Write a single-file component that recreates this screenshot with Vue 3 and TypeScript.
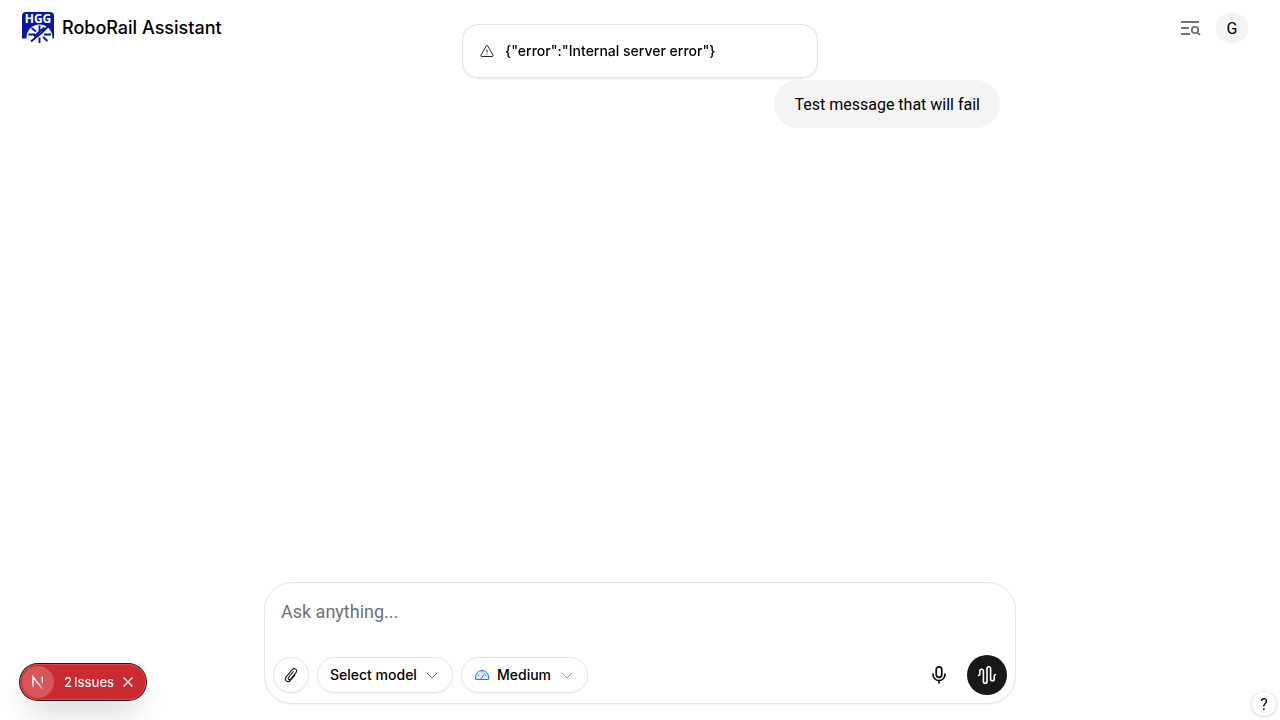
<script setup lang="ts">
import { ref } from 'vue'

interface Message {
  id: number
  text: string
}

const messages = ref<Message[]>([{ id: 1, text: 'Test message that will fail' }])
const toast = ref('{"error":"Internal server error"}')
const draft = ref('')
const model = ref('Select model')
const effort = ref('Medium')
const issues = ref(2)
const issuesOpen = ref(true)
</script>

<template>
  <div class="page">
    <header class="header">
      <a class="brand" href="#">
        <svg class="logo" viewBox="0 0 32 32" aria-hidden="true">
          <path d="M4 0H28Q32 0 32 4V26.500H0V4Q0 0 4 0Z" fill="#0717a0" />
          <circle cx="17.500" cy="25.500" r="13" fill="#fff" />
          <path d="M17.500 13.500V19M9.500 16L14 19.500M6.500 22.500H13M22 22.500H29M9 29.500L20 20.500L26 14.500M25.500 29L21 25M17.500 25.500V31M12 24.500L22.500 15.500" fill="none" stroke="#0717a0" stroke-width="1.900" />
          <text x="16" y="10.800" text-anchor="middle" fill="#fff">HGG</text>
        </svg>
        <span>RoboRail Assistant</span>
      </a>
      <div class="header-actions">
        <button class="icon-button" aria-label="Search history">
          <svg width="24" height="24" viewBox="0 0 24 24" fill="none" stroke="#71717a" stroke-width="1.800">
            <path d="M3 6H21M3 12H11M3 18H12" />
            <circle cx="17" cy="14" r="3.200" />
            <path d="M19.400 16.400L22 19" />
          </svg>
        </button>
        <button class="avatar" aria-label="Account">G</button>
      </div>
    </header>

    <main class="conversation">
      <p v-for="message in messages" :key="message.id" class="bubble">{{ message.text }}</p>
    </main>

    <form class="composer" @submit.prevent>
      <textarea v-model="draft" rows="1" placeholder="Ask anything..." aria-label="Message"></textarea>
      <div class="toolbar">
        <button type="button" class="attach" aria-label="Attach file">
          <svg width="16" height="16" viewBox="0 0 16 16" fill="none" stroke="#18181b" stroke-width="1.100" stroke-linecap="round" stroke-linejoin="round">
            <path d="M10.300 4.700L5.500 10.500Q4.700 11.700 5.700 12.400Q6.700 13 7.600 12L13 5.600Q14.500 3.500 12.700 2.100Q10.900 .900 9.200 2.700L3.200 9.800Q1.300 12.300 3.300 14Q5.400 15.600 7.400 13.500L12 8" />
          </svg>
        </button>
        <label class="picker">
          <select v-model="model" aria-label="Model">
            <option>Select model</option>
          </select>
          <svg class="chevron" width="16" height="16" viewBox="0 0 16 16"><path d="M2.500 5.500L8 11L13.500 5.500" /></svg>
        </label>
        <label class="picker">
          <svg width="16" height="16" viewBox="0 0 16 16" fill="none" stroke="#2979ff" stroke-linejoin="round">
            <path d="M1.500 12.500V10A6.500 6.500 0 0 1 14.500 10V12.500Z" fill="#dbeafe" />
            <path d="M7 12L10.500 6.500M8 4V5.500M3.500 8L4.800 8.600M12.500 8L11.300 8.600" />
          </svg>
          <select v-model="effort" aria-label="Reasoning effort">
            <option>Medium</option>
          </select>
          <svg class="chevron faint" width="16" height="16" viewBox="0 0 16 16"><path d="M2.500 5.500L8 11L13.500 5.500" /></svg>
        </label>
        <span class="spacer"></span>
        <button type="button" class="mic" aria-label="Dictate">
          <svg width="20" height="20" viewBox="0 0 20 20" fill="none" stroke="#09090b" stroke-width="1.700">
            <rect x="7.200" y="1.800" width="5.600" height="10.600" rx="2.800" />
            <path d="M4 8.500V9.500A6 6 0 0 0 16 9.500V8.500M10 15.500V18.500" />
          </svg>
        </button>
        <button type="button" class="voice" aria-label="Voice mode">
          <svg width="20" height="20" viewBox="0 0 20 20" fill="none" stroke="#fff" stroke-width="1.600" stroke-linecap="round">
            <path d="M1.500 10.500Q2.800 10.300 2.800 9V6A1.800 1.800 0 0 1 6.400 6V16.500A1.800 1.800 0 0 0 10 16.500V3.500A1.800 1.800 0 0 1 13.600 3.500V14A1.800 1.800 0 0 0 17.200 14V11Q17.200 9.500 18.500 9.500" />
          </svg>
        </button>
      </div>
    </form>

    <div class="toast" role="alert">
      <svg width="16" height="16" viewBox="0 0 16 16" fill="none" stroke="#27272a" stroke-linejoin="round">
        <path d="M7.300 2.800Q8 1.800 8.700 2.800L14 12Q14.500 13.500 13.300 13.500H2.700Q1.500 13.500 2 12Z" />
        <path d="M8 6.500V9.500M8 10.800V11.800" />
      </svg>
      <span>{{ toast }}</span>
    </div>

    <div v-if="issuesOpen" class="issues">
      <button class="issues-main">
        <span class="n-mark">
          <svg width="14" height="14" viewBox="0 0 14 14" fill="none" stroke-width="1.500">
            <defs>
              <linearGradient id="fade" x1="0" y1="0" x2="0" y2="1">
                <stop offset=".5" stop-color="#fff" />
                <stop offset="1" stop-color="#fff" stop-opacity="0.200" />
              </linearGradient>
            </defs>
            <path d="M2 12.500V2L11.500 14" stroke="url(#fade)" />
            <path d="M10.500 1.500H12V9H10.500Z" fill="url(#fade)" />
          </svg>
        </span>
        <span class="issues-label"><span>{{ issues }}</span> <span>Issues</span></span>
      </button>
      <button class="issues-close" aria-label="Close" @click="issuesOpen = false">
        <svg width="12" height="12" viewBox="0 0 12 12" stroke="#fff" stroke-width="1.300"><path d="M1.500 1.500L10.500 10.500M10.500 1.500L1.500 10.500" /></svg>
      </button>
    </div>

    <button class="help" aria-label="Help">?</button>
  </div>
</template>

<style>
body {
  background: #fff;
}
</style>

<style scoped>
* {
  box-sizing: border-box;
}
.page {
  min-height: 100vh;
  display: flex;
  flex-direction: column;
  font: 400 16px/24px Roboto, "Liberation Sans", sans-serif;
  color: #000;
}
button {
  font: inherit;
  color: inherit;
  padding: 0;
  border: 0;
  background: none;
  cursor: pointer;
  display: flex;
  align-items: center;
  justify-content: center;
}
svg {
  flex: none;
}
.header {
  height: 56px;
  display: flex;
  align-items: center;
  justify-content: space-between;
  padding: 0 32px 0 22px;
}
.brand {
  display: flex;
  align-items: center;
  gap: 8px;
  color: inherit;
  text-decoration: none;
  font-family: Inter, sans-serif;
  font-size: 18px;
  font-weight: 500;
}
.logo {
  width: 32px;
  height: 32px;
  overflow: visible;
}
.logo text {
  font: 700 12px "Noto Sans", sans-serif;
}
.header-actions {
  display: flex;
  align-items: center;
  gap: 14px;
}
.avatar {
  width: 32px;
  height: 32px;
  padding-top: 1px;
  border-radius: 50%;
  background: #f4f4f4;
}
.conversation {
  flex: 1;
  width: 100%;
  max-width: 768px;
  margin: 0 auto;
  padding: 24px;
  display: flex;
  flex-direction: column;
  align-items: flex-end;
}
.bubble {
  margin: 0;
  padding: 13px 20px 11px;
  border-radius: 24px;
  background: #f4f4f4;
}
.composer {
  width: calc(100% - 32px);
  max-width: 752px;
  margin: 0 auto 16px;
  padding: 8px;
  border: 1px solid #e4e4e7;
  border-radius: 28px;
  box-shadow: 0 1px 2px rgba(0, 0, 0, 0.05);
}
textarea {
  display: block;
  width: 100%;
  height: 52px;
  margin-bottom: 12px;
  padding: 9px 8px;
  border: 0;
  outline: 0;
  resize: none;
  background: none;
  font: 400 18px/24px Roboto, sans-serif;
}
textarea::placeholder {
  color: #71717a;
}
.toolbar {
  display: flex;
  align-items: center;
  gap: 8px;
}
.attach,
.picker {
  height: 36px;
  border: 1px solid #e4e4e7;
  border-radius: 18px;
  box-shadow: 0 1px 2px rgba(0, 0, 0, 0.05);
}
.attach {
  width: 36px;
}
.picker {
  display: flex;
  align-items: center;
  gap: 7px;
  padding: 0 12px;
}
select {
  appearance: none;
  padding: 0;
  border: 0;
  outline: 0;
  background: none;
  color: inherit;
  font: 500 14px/20px Inter, sans-serif;
}
.chevron {
  fill: none;
  stroke: #71717a;
}
.faint {
  stroke: #a1a1aa;
}
.spacer {
  flex: 1;
}
.mic,
.voice {
  width: 40px;
  height: 40px;
  border-radius: 50%;
}
.voice {
  background: #18181b;
}
.toast {
  position: fixed;
  top: 24px;
  left: 50%;
  transform: translateX(-50%);
  width: 356px;
  max-width: calc(100vw - 32px);
  display: flex;
  align-items: center;
  gap: 10px;
  padding: 16px;
  border: 1px solid #e4e4e7;
  border-radius: 16px;
  background: #fff;
  box-shadow: 0 1px 2px rgba(0, 0, 0, 0.08);
  font: 500 14px/20px Inter, sans-serif;
}
.issues {
  position: fixed;
  left: 20px;
  bottom: 20px;
  height: 36px;
  display: flex;
  align-items: center;
  gap: 8px;
  padding: 0 12px 0 2px;
  border-radius: 18px;
  background: #ca2a30;
  color: #fff;
  box-shadow: 0 0 0 1px #171717, inset 0 0 0 1px #e5484d, 0 16px 32px -8px rgba(0, 0, 0, 0.24);
  font: 500 13px/20px Inter, sans-serif;
}
.issues-main {
  gap: 10px;
}
.issues-label {
  display: flex;
  gap: 2px;
}
.n-mark {
  width: 32px;
  height: 32px;
  border-radius: 50%;
  background: #d6565c;
  display: grid;
  place-items: center;
}
.help {
  position: fixed;
  right: 4px;
  bottom: 4px;
  width: 24px;
  height: 24px;
  padding-top: 1px;
  border-radius: 50%;
  background: #fff;
  box-shadow: 0 0 0 1px rgba(0, 0, 0, 0.05), 0 1px 4px rgba(0, 0, 0, 0.16);
}
</style>
